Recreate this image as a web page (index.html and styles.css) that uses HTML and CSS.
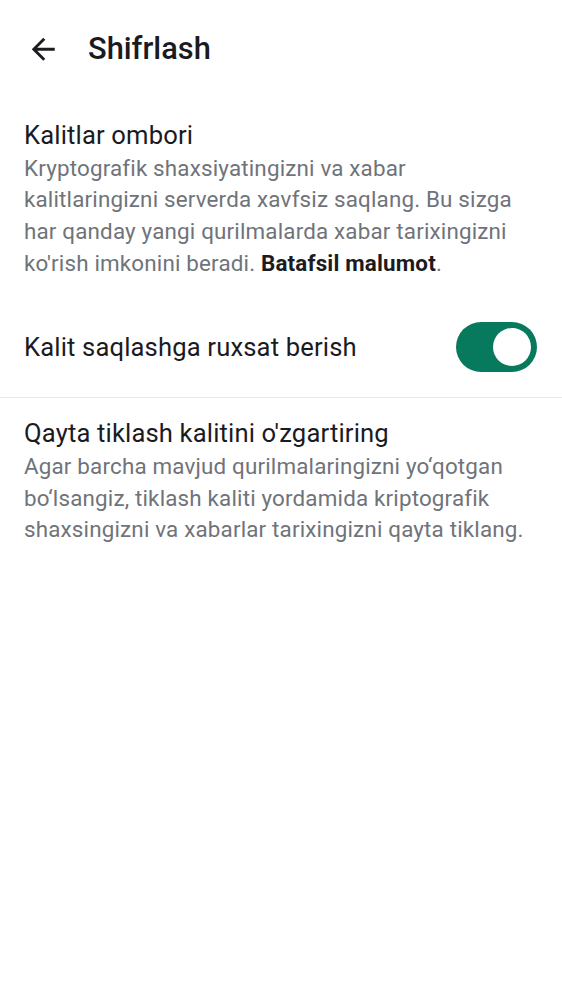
FILE: index.html
```html
<!DOCTYPE html>
<html lang="uz">
<head>
<meta charset="utf-8">
<link rel="stylesheet" href="styles.css">
</head>
<body>
<header class="topbar">
  <button class="back" aria-label="Orqaga">
    <svg class="back-icon" viewBox="0 0 24 24"><path d="M20 11H7.83l5.59-5.59L12 4l-8 8 8 8 1.41-1.41L7.83 13H20v-2z" fill="#1c1b1f"/></svg>
  </button>
  <h1 class="title">Shifrlash</h1>
</header>
<section class="block first">
  <h2 class="item-title">Kalitlar ombori</h2>
  <p class="item-desc">Kryptografik shaxsiyatingizni va xabar kalitlaringizni serverda xavfsiz saqlang. Bu sizga har qanday yangi qurilmalarda xabar tarixingizni ko'rish imkonini beradi. <strong>Batafsil malumot</strong>.</p>
</section>
<div class="row switch-row">
  <span class="row-label">Kalit saqlashga ruxsat berish</span>
  <span class="switch on"><span class="knob"></span></span>
</div>
<div class="divider"></div>
<section class="block">
  <h2 class="item-title">Qayta tiklash kalitini o'zgartiring</h2>
  <p class="item-desc">Agar barcha mavjud qurilmalaringizni yo‘qotgan bo‘lsangiz, tiklash kaliti yordamida kriptografik shaxsingizni va xabarlar tarixingizni qayta tiklang.</p>
</section>
</body>
</html>
```
FILE: styles.css
```css
* { box-sizing: border-box; }
html, body { margin: 0; padding: 0; background: #fff; }
body {
  font-family: Roboto, "Noto Sans", "Liberation Sans", sans-serif;
  color: #1b1b1f;
  width: 562px;
}
.topbar {
  display: flex;
  align-items: center;
  height: 98px;
  padding-left: 26px;
}
.back {
  display: block;
  width: 34.5px;
  height: 34.5px;
  padding: 0;
  margin: 0;
  border: 0;
  background: none;
}
.back-icon { display: block; width: 34.5px; height: 34.5px; }
.title {
  margin: 0 0 0 27.5px;
  font-size: 30.8px;
  line-height: 36px;
  font-weight: 500;
  color: #1b1b1f;
}
.block {
  padding: 0 24px;
}
.block.first { padding-top: 21px; }
.item-title {
  margin: 0;
  font-size: 25.6px;
  font-weight: 400;
  line-height: 32px;
  letter-spacing: 0.15px;
  color: #1b1b1f;
}
.item-desc {
  margin: 1.5px 0 0;
  font-size: 22.4px;
  line-height: 31.7px;
  letter-spacing: 0.17px;
  color: #6f737a;
}
.item-desc strong {
  color: #1b1b1f;
  font-weight: 700;
}
.row {
  display: flex;
  align-items: center;
  justify-content: space-between;
  padding: 0 25px 0 24px;
}
.switch-row { padding-top: 43px; padding-bottom: 25px; }
.row-label { font-size: 25.6px; letter-spacing: 0.15px; color: #1b1b1f; }
.switch {
  display: flex;
  align-items: center;
  justify-content: flex-end;
  width: 81px;
  height: 50px;
  border-radius: 25px;
  background: #077a5d;
  padding: 0 6px;
}
.knob {
  width: 38px;
  height: 38px;
  border-radius: 50%;
  background: #fff;
}
.divider { height: 1px; background: #ebebed; margin-bottom: 19px; }
```
